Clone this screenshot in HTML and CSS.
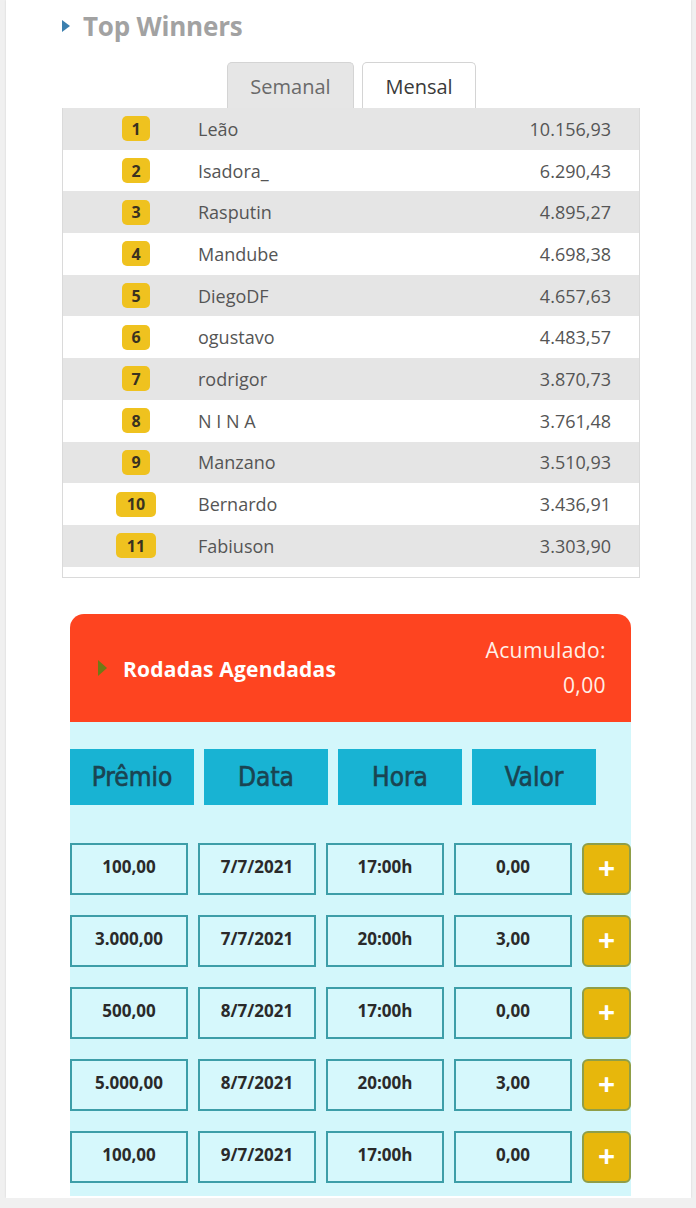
FILE: index.html
```html
<!DOCTYPE html>
<html lang="pt">
<head>
<meta charset="utf-8">
<title>Top Winners</title>
<link rel="stylesheet" href="styles.css">
</head>
<body>
<div class="card">
  <h2 class="title"><span class="tri"></span>Top Winners</h2>

  <div class="tabs">
    <div class="tab tab-active">Semanal</div>
    <div class="tab">Mensal</div>
  </div>

  <div class="board">
    <div class="row odd"><span class="badge">1</span><span class="name">Leão</span><span class="score">10.156,93</span></div>
    <div class="row"><span class="badge">2</span><span class="name">Isadora_</span><span class="score">6.290,43</span></div>
    <div class="row odd"><span class="badge">3</span><span class="name">Rasputin</span><span class="score">4.895,27</span></div>
    <div class="row"><span class="badge">4</span><span class="name">Mandube</span><span class="score">4.698,38</span></div>
    <div class="row odd"><span class="badge">5</span><span class="name">DiegoDF</span><span class="score">4.657,63</span></div>
    <div class="row"><span class="badge">6</span><span class="name">ogustavo</span><span class="score">4.483,57</span></div>
    <div class="row odd"><span class="badge">7</span><span class="name">rodrigor</span><span class="score">3.870,73</span></div>
    <div class="row"><span class="badge">8</span><span class="name">N I N A</span><span class="score">3.761,48</span></div>
    <div class="row odd"><span class="badge">9</span><span class="name">Manzano</span><span class="score">3.510,93</span></div>
    <div class="row"><span class="badge wide">10</span><span class="name">Bernardo</span><span class="score">3.436,91</span></div>
    <div class="row odd"><span class="badge wide">11</span><span class="name">Fabiuson</span><span class="score">3.303,90</span></div>
  </div>

  <div class="panel">
    <div class="panel-head">
      <div class="panel-title"><span class="tri-olive"></span>Rodadas Agendadas</div>
      <div class="acc"><div>Acumulado:</div><div>0,00</div></div>
    </div>
    <div class="panel-body">
      <div class="cols">
        <div class="col">Prêmio</div>
        <div class="col">Data</div>
        <div class="col">Hora</div>
        <div class="col">Valor</div>
      </div>
      <div class="slots">
        <div class="slot"><div class="cell">100,00</div><div class="cell">7/7/2021</div><div class="cell">17:00h</div><div class="cell">0,00</div><div class="plus">+</div></div>
        <div class="slot"><div class="cell">3.000,00</div><div class="cell">7/7/2021</div><div class="cell">20:00h</div><div class="cell">3,00</div><div class="plus">+</div></div>
        <div class="slot"><div class="cell">500,00</div><div class="cell">8/7/2021</div><div class="cell">17:00h</div><div class="cell">0,00</div><div class="plus">+</div></div>
        <div class="slot"><div class="cell">5.000,00</div><div class="cell">8/7/2021</div><div class="cell">20:00h</div><div class="cell">3,00</div><div class="plus">+</div></div>
        <div class="slot"><div class="cell">100,00</div><div class="cell">9/7/2021</div><div class="cell">17:00h</div><div class="cell">0,00</div><div class="plus">+</div></div>
      </div>
    </div>
  </div>
</div>
</body>
</html>
```

FILE: styles.css
```css
* { box-sizing: border-box; }

body {
  margin: 0;
  background: #f0f0f0;
  font-family: "Open Sans", "Liberation Sans", sans-serif;
}

.card {
  margin-left: 6px;
  width: 685px;
  background: #ffffff;
  padding: 8px 0 2px 0;
  box-shadow: 0 0 2px rgba(0, 0, 0, 0.12);
}

.title {
  margin: 0 0 18px 56px;
  display: flex;
  align-items: center;
  gap: 13px;
  font-size: 26px;
  line-height: 36px;
  font-weight: 700;
  color: #a2a2a2;
  letter-spacing: -0.2px;
}

.tri {
  width: 0;
  height: 0;
  border-left: 8px solid #3b7fae;
  border-top: 6.5px solid transparent;
  border-bottom: 6.5px solid transparent;
}

.tabs {
  display: flex;
  justify-content: center;
  gap: 8px;
  width: 578px;
  margin-left: 56px;
  padding-left: 1px;
}

.tab {
  width: 114px;
  height: 46px;
  border: 1px solid #d4d4d4;
  border-bottom: none;
  border-radius: 5px 5px 0 0;
  background: #ffffff;
  color: #3a3a3a;
  font-size: 20px;
  display: flex;
  align-items: center;
  justify-content: center;
  padding-top: 2px;
}

.tab-active {
  width: 127px;
  background: #e6e6e6;
  color: #6a6a6a;
}

.board {
  margin-left: 56px;
  width: 578px;
  border: 1px solid #dadada;
  border-top: none;
  padding-bottom: 10px;
}

.row {
  height: 41.7px;
  display: flex;
  align-items: center;
  background: #ffffff;
  font-size: 18px;
  color: #555555;
}

.row.odd { background: #e5e5e5; }

.badge {
  margin-left: 59px;
  width: 28px;
  height: 25px;
  border-radius: 5px;
  background: #efc21f;
  color: #3a3220;
  font-weight: 700;
  font-size: 16px;
  display: flex;
  align-items: center;
  justify-content: center;
}

.badge.wide {
  margin-left: 53px;
  width: 40px;
}

.name {
  margin-left: 48px;
  flex: 1;
}

.badge.wide + .name { margin-left: 42px; }

.score {
  padding-right: 28px;
}

.panel {
  margin: 36px 0 0 64px;
  width: 561px;
}

.panel-head {
  height: 108px;
  background: #fe4420;
  border-radius: 14px 14px 0 0;
  display: flex;
  align-items: center;
  justify-content: space-between;
  padding: 0 25px 0 28px;
}

.panel-title {
  display: flex;
  align-items: center;
  gap: 16px;
  color: #ffffff;
  font-weight: 700;
  font-size: 21px;
  letter-spacing: 0.2px;
  padding-top: 3px;
}

.tri-olive {
  width: 0;
  height: 0;
  border-left: 9px solid #6f7a16;
  border-top: 8.5px solid transparent;
  border-bottom: 8.5px solid transparent;
  margin-top: -3px;
}

.acc {
  text-align: right;
  color: #fff0e8;
  font-size: 21px;
  line-height: 35px;
  letter-spacing: 0.4px;
}

.panel-body {
  background: #d3f7fb;
  padding: 27px 0 13px 0;
}

.cols {
  display: flex;
  gap: 10px;
}

.col {
  width: 124px;
  height: 56px;
  background: #18b3d3;
  color: #1a4452;
  font-family: "DejaVu Sans Condensed", "DejaVu Sans", sans-serif;
  font-stretch: condensed;
  font-weight: 400;
  -webkit-text-stroke: 0.6px #1a4452;
  font-size: 26px;
  display: flex;
  align-items: center;
  justify-content: center;
}

.slots {
  margin-top: 38px;
  display: flex;
  flex-direction: column;
  gap: 20px;
}

.slot {
  display: grid;
  grid-template-columns: 118px 118px 118px 118px 49px;
  column-gap: 10px;
  height: 52px;
}

.cell {
  border: 2px solid #3d9ea8;
  background: #d6f8fc;
  color: #2a2a2a;
  font-weight: 700;
  font-size: 17px;
  display: flex;
  align-items: center;
  justify-content: center;
  padding-bottom: 4px;
}

.plus {
  border: 2px solid #8f9e48;
  border-radius: 6px;
  background: #e7b70c;
  color: #ffffff;
  font-weight: 700;
  font-size: 30px;
  display: flex;
  align-items: center;
  justify-content: center;
  padding-bottom: 3px;
}
```
